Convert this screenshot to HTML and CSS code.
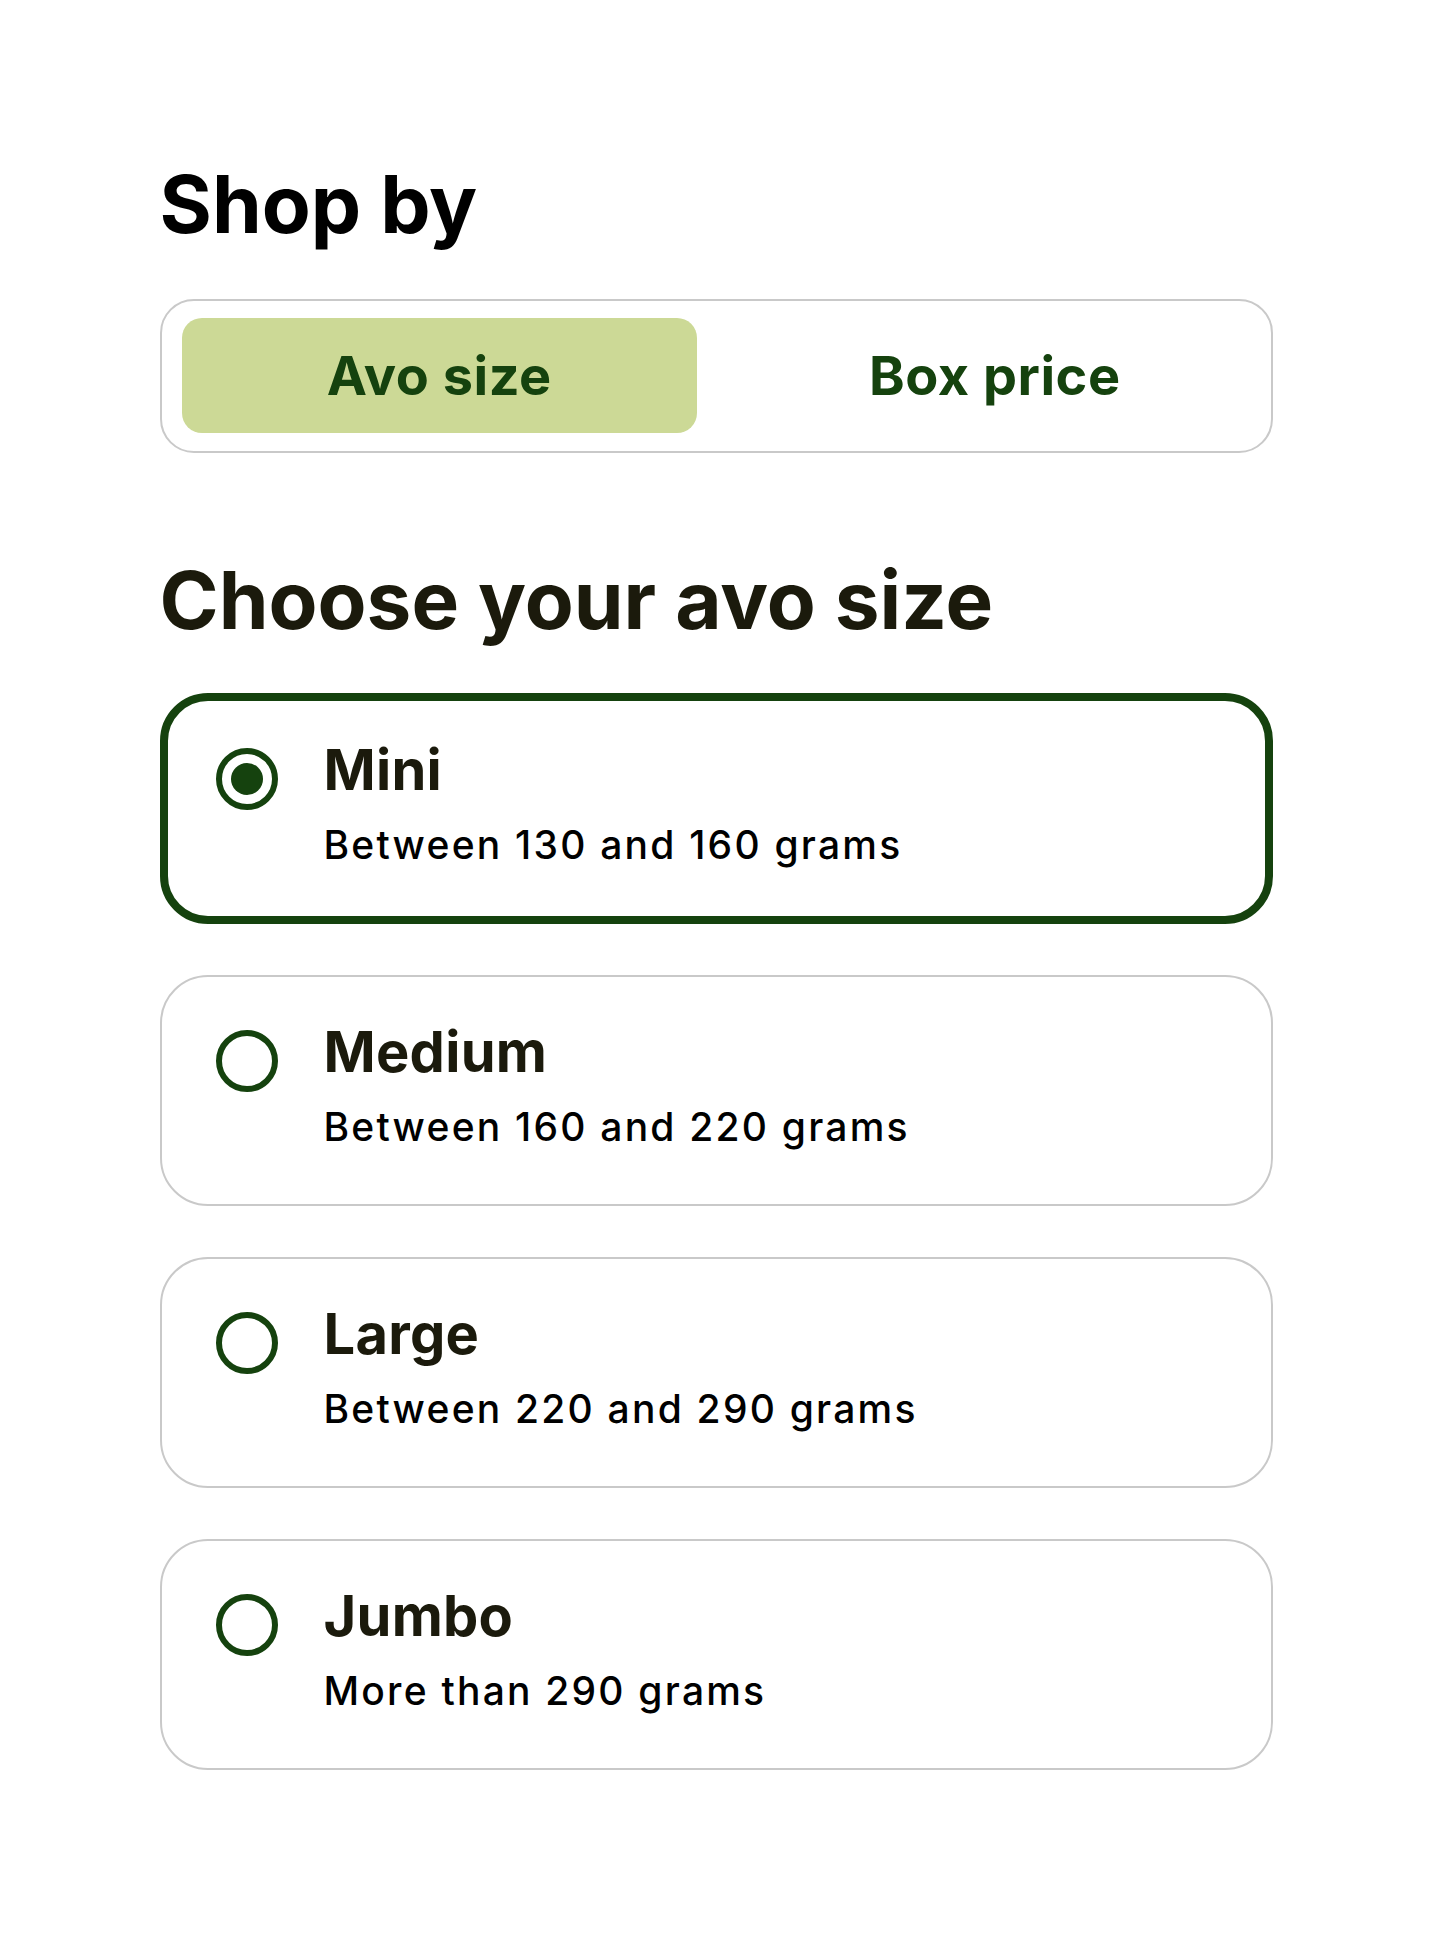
FILE: index.html
```html
<!DOCTYPE html>
<html lang="en">
<head>
    <meta charset="UTF-8">
    <meta name="viewport" content="width=device-width, initial-scale=1.0">
    <title>Shop by avo size</title>
    <link rel="stylesheet" href="styles.css">
</head>
<body>
    <main class="page">
        <h1 class="title">Shop by</h1>

        <!-- Toggle between the two shop modes -->
        <div class="toggle">
            <button class="toggle-btn active">Avo size</button>
            <button class="toggle-btn">Box price</button>
        </div>

        <h2 class="title subtitle">Choose your avo size</h2>

        <div class="size-list">
            <label class="size-card selected">
                <span class="radio"></span>
                <span class="size-text">
                    <span class="size-name">Mini</span>
                    <span class="size-desc">Between 130 and 160 grams</span>
                </span>
            </label>
            <label class="size-card">
                <span class="radio"></span>
                <span class="size-text">
                    <span class="size-name">Medium</span>
                    <span class="size-desc">Between 160 and 220 grams</span>
                </span>
            </label>
            <label class="size-card">
                <span class="radio"></span>
                <span class="size-text">
                    <span class="size-name">Large</span>
                    <span class="size-desc">Between 220 and 290 grams</span>
                </span>
            </label>
            <label class="size-card">
                <span class="radio"></span>
                <span class="size-text">
                    <span class="size-name">Jumbo</span>
                    <span class="size-desc">More than 290 grams</span>
                </span>
            </label>
        </div>
    </main>
</body>
</html>
```

FILE: styles.css
```css
body {
    background-color: #ffffff;
    margin: 0;
    font-family: Inter, "Noto Sans", Arial, sans-serif;
    color: #000000;
}

.page {
    width: 1113px;
    margin: 0 auto;
    padding-top: 164px;
    padding-bottom: 120px;
}

/* Headings */
.title {
    margin: 0;
    font-size: 80px;
    line-height: 1;
    font-weight: 700;
    letter-spacing: 0;
    color: #000000;
}

.subtitle {
    margin-top: 107px;
    color: #1b1a0c;
}

/* Toggle */
.toggle {
    margin-top: 55px;
    display: grid;
    grid-template-columns: 1fr 1fr;
    column-gap: 40px;
    padding: 17px 18px 18px 20px;
    border: 2px solid #c9c9c9;
    border-radius: 34px;
    box-sizing: border-box;
    height: 154px;
}

.toggle-btn {
    border: none;
    background: none;
    border-radius: 20px;
    font-family: inherit;
    font-size: 54px;
    font-weight: 700;
    letter-spacing: 0.01em;
    color: #15420e;
    cursor: pointer;
    padding: 0;
}

.toggle-btn.active {
    background-color: #ccd996;
}

/* Size cards */
.size-list {
    margin-top: 53px;
    display: flex;
    flex-direction: column;
    gap: 51px;
}

.size-card {
    display: flex;
    align-items: flex-start;
    height: 231px;
    box-sizing: border-box;
    padding: 42px 40px 0 54px;
    border: 2px solid #c9c9c9;
    border-radius: 48px;
    cursor: pointer;
}

.size-card.selected {
    border: 8px solid #15420e;
    padding: 36px 34px 0 48px;
}

.radio {
    flex: none;
    width: 62px;
    height: 62px;
    margin-top: 11px;
    box-sizing: border-box;
    border: 6px solid #15420e;
    border-radius: 50%;
    display: flex;
    align-items: center;
    justify-content: center;
}

.size-card.selected .radio::after {
    content: "";
    width: 32px;
    height: 32px;
    border-radius: 50%;
    background-color: #15420e;
}

.size-text {
    margin-left: 46px;
    display: flex;
    flex-direction: column;
}

.size-name {
    font-size: 56px;
    line-height: 1.2;
    font-weight: 700;
    letter-spacing: 0.005em;
    color: #1b1a0c;
}

.size-desc {
    margin-top: 15px;
    font-size: 39px;
    line-height: 1.35;
    font-weight: 500;
    letter-spacing: 0.057em;
    color: #000000;
}
```
